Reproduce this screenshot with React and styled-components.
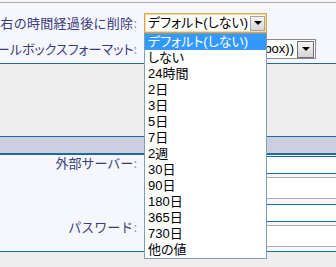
import React from 'react';
import styled, { createGlobalStyle } from 'styled-components';

const Global = createGlobalStyle`
  html, body { margin: 0; padding: 0; background: #eeeeee; overflow: hidden; }
  body { width: 336px; height: 267px; font-family: "Noto Sans CJK JP", sans-serif; }
`;

const BLUE = '#1d6aa5';
const PANEL = '#f5f7fc';

const Page = styled.div`
  width: 336px;
  height: 267px;
  overflow: hidden;
  background: #eeeeee;
`;

const TopStrip = styled.div`
  height: 2px;
  background: ${PANEL};
`;

const SettingsPanel = styled.div`
  background: ${PANEL};
  border-top: 1px solid #a9a9a9;
  border-bottom: 1px solid ${BLUE};
  padding: 10px 0 4px;
  display: flex;
  flex-direction: column;
  gap: 6px;
`;

const FormRow = styled.div`
  display: grid;
  grid-template-columns: 144px 1fr;
  align-items: center;
  height: 20px;
`;

const Label = styled.div`
  display: flex;
  justify-content: flex-end;
  overflow: hidden;
  white-space: nowrap;
  padding-right: 7px;
  padding-top: ${p => p.$top || 0}px;
  font-size: 13px;
  letter-spacing: ${p => p.$spacing || 0}px;
  line-height: 16px;
  color: #3b3b7a;
  font-feature-settings: ${p => (p.$prop ? '"palt"' : 'normal')};
`;

const Colon = styled.span`
  color: #8a97d0;
  letter-spacing: 0;
`;

const Field = styled.div`
  position: relative;
  display: flex;
  align-items: center;
`;

const Select = styled.div`
  box-sizing: border-box;
  display: flex;
  align-items: center;
  width: ${p => p.$width}px;
  height: 20px;
  background: #fff;
  border: 1px solid ${p => (p.$focused ? '#d8a648' : '#8a8a8a')};
  box-shadow: ${p => (p.$focused ? 'inset 0 0 0 1px #f6dba6' : 'none')};
  font-family: "Liberation Sans", "Noto Sans CJK JP", sans-serif;
  font-feature-settings: "palt";
  font-size: 13px;
  color: #000;
`;

const SelectText = styled.span`
  flex: 1;
  padding: 0 ${p => (p.$right ? 3 : 0)}px 0 ${p => (p.$right ? 0 : 3)}px;
  text-align: ${p => (p.$right ? 'right' : 'left')};
  white-space: nowrap;
  overflow: hidden;
  line-height: 18px;
`;

const ArrowButton = styled.span`
  box-sizing: border-box;
  display: flex;
  align-items: center;
  justify-content: center;
  flex-shrink: 0;
  width: ${p => p.$size}px;
  height: ${p => p.$size}px;
  margin-right: 1px;
  background: linear-gradient(#f6f6f6, #d4d4d4);
  border: 1px solid ${p => (p.$dark ? '#6f6f6f' : '#a4a4a4')};
  &::after {
    content: '';
    width: 0;
    height: 0;
    border-left: 4px solid transparent;
    border-right: 4px solid transparent;
    border-top: 4px solid #000;
  }
`;

const DropList = styled.ul`
  position: absolute;
  top: 20px;
  left: 0;
  z-index: 10;
  box-sizing: border-box;
  width: 123px;
  margin: 0;
  padding: 0;
  list-style: none;
  background: #fff;
  border: 1px solid #7f9db9;
`;

const Option = styled.li`
  height: 16px;
  line-height: 16px;
  padding-left: 3px;
  font-family: "Liberation Sans", "Noto Sans CJK JP", sans-serif;
  font-feature-settings: "palt";
  font-size: 13px;
  white-space: nowrap;
  color: ${p => (p.$active ? '#fff' : '#000')};
  background: ${p => (p.$active ? '#3399ff' : 'transparent')};
`;

const Section = styled.section`
  margin-top: 72px;
  border-top: 1px solid ${BLUE};
  border-bottom: 1px solid ${BLUE};
  background: ${PANEL};
`;

const SectionHeader = styled.div`
  height: 16px;
  background: #cdcfe0;
  border-bottom: 2px solid ${BLUE};
`;

const TableRow = styled.div`
  display: grid;
  grid-template-columns: 144px 1fr;
  height: 48px;
`;

const Inputs = styled.div`
  display: flex;
  flex-direction: column;
  gap: 3px;
  padding: 1px 0 4px 6px;
`;

const TextInput = styled.div`
  box-sizing: border-box;
  width: 300px;
  height: 18px;
  background: #fff;
  border: 1px solid ${BLUE};
`;

const NoteBox = styled.div`
  box-sizing: border-box;
  width: 300px;
  height: 22px;
  background: #fff;
  border: 1px solid #ababab;
`;

const options = [
  'デフォルト(しない)', 'しない', '24時間', '2日', '3日', '5日', '7日', '2週',
  '30日', '90日', '180日', '365日', '730日', '他の値',
];

export default function App() {
  return (
    <Page>
      <Global />
      <TopStrip />
      <SettingsPanel>
        <FormRow>
          <Label $spacing={0.3}>右の時間経過後に削除<Colon>:</Colon></Label>
          <Field>
            <Select $width={123} $focused>
              <SelectText>デフォルト(しない)</SelectText>
              <ArrowButton $size={15} />
            </Select>
            <DropList>
              {options.map((o, i) => (
                <Option key={o} $active={i === 0}>{o}</Option>
              ))}
            </DropList>
          </Field>
        </FormRow>
        <FormRow>
          <Label $prop>メールボックスフォーマット<Colon>:</Colon></Label>
          <Field>
            <Select $width={172}>
              <SelectText $right>(mbox))</SelectText>
              <ArrowButton $size={17} $dark />
            </Select>
          </Field>
        </FormRow>
      </SettingsPanel>
      <Section>
        <SectionHeader />
        <TableRow>
          <Label>外部サーバー<Colon>:</Colon></Label>
          <Inputs>
            <TextInput />
            <NoteBox />
          </Inputs>
        </TableRow>
        <TableRow>
          <Label $top={16}>パスワード<Colon>:</Colon></Label>
          <Inputs>
            <TextInput />
            <NoteBox />
          </Inputs>
        </TableRow>
      </Section>
    </Page>
  );
}
